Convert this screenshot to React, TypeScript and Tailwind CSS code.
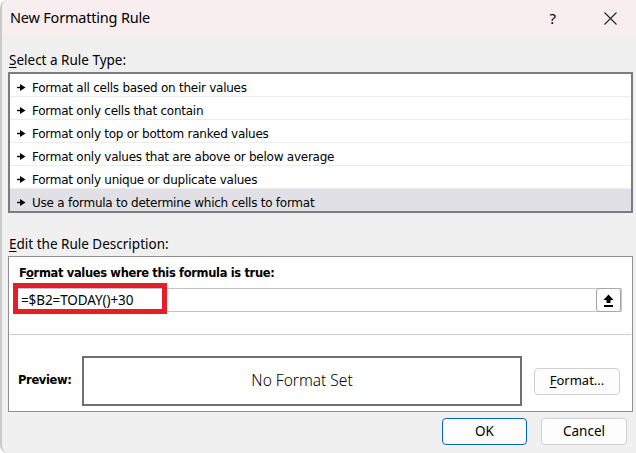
import React from 'react';

const segoe = { fontFamily: '"Noto Sans", "Open Sans", sans-serif' };
const tahoma = { fontFamily: '"DejaVu Sans", Verdana, sans-serif' };

const ruleTypes = [
  'Format all cells based on their values',
  'Format only cells that contain',
  'Format only top or bottom ranked values',
  'Format only values that are above or below average',
  'Format only unique or duplicate values',
  'Use a formula to determine which cells to format',
];

const Pointer = () => (
  <svg width="9" height="7" viewBox="0 0 9 7" className="shrink-0">
    <rect x="0" y="2.8" width="4" height="1.4" fill="#000" />
    <path d="M3 0 L8.5 3.5 L3 7 Z" fill="#000" />
  </svg>
);

const App = () => {
  return (
    <div className="w-[636px] h-[453px] overflow-hidden bg-[#f0f0f0] border-l-2 border-[#c9c9c9] rounded-l-[8px] flex flex-col text-black">
      {/* Title bar */}
      <div className="h-[36px] shrink-0 bg-[#f8eeef] flex items-center pl-[8px]" style={segoe}>
        <span className="text-[14.5px] tracking-[-0.2px]">New Formatting Rule</span>
        <span className="ml-auto text-[15px] mr-[48px]">?</span>
        <svg width="13" height="13" viewBox="0 0 13 13" className="mr-[19px]">
          <path d="M0.5 0.5 L12.5 12.5 M12.5 0.5 L0.5 12.5" stroke="#222" strokeWidth="1.1" />
        </svg>
      </div>

      <div className="pt-[15px] pl-[7px] text-[13.5px] leading-[18px]" style={segoe}>
        <span className="underline underline-offset-2">S</span>elect a Rule Type:
      </div>

      {/* Rule type list */}
      <div className="ml-[6px] mt-[3px] w-[625px] h-[141px] border-2 border-[#7c7c7c] bg-white flex flex-col" style={tahoma}>
        {ruleTypes.map((r, i) => (
          <div
            key={r}
            className={`flex items-center gap-[6px] pl-[7px] pt-[5px] text-[12px] tracking-[-0.25px] ${
              i === ruleTypes.length - 1 ? 'h-[22px] bg-[#e0e0e6]' : 'h-[23px] border-b border-[#ececec]'
            }`}
          >
            <Pointer />
            <span>{r}</span>
          </div>
        ))}
      </div>

      <div className="mt-[22px] pl-[7px] text-[13.5px] leading-[18px]" style={segoe}>
        <span className="underline underline-offset-2">E</span>dit the Rule Description:
      </div>

      {/* Rule description */}
      <div className="ml-[6px] mt-[3px] w-[625px] h-[156px] border border-[#8f8f8f] bg-white flex flex-col">
        <div className="pt-[8px] pl-[10px] text-[11.5px] font-bold tracking-[-0.35px] leading-[16px]" style={tahoma}>
          F<span className="underline">o</span>rmat values where this formula is true:
        </div>
        <div className="relative ml-[6px] mt-[7px] w-[607px] h-[24px] border border-[#c4c4c4] flex items-center">
          <span className="pl-[5px] text-[13.5px] tracking-[-0.1px]" style={segoe}>=$B2=TODAY()+30</span>
          <div className="ml-auto w-[25px] h-[24px] -mt-[1px] -mb-[1px] border border-[#a6a6a6] rounded-[3px] bg-white flex items-center justify-center">
            <svg width="11" height="13" viewBox="0 0 11 13">
              <path d="M5.5 0.5 L10.5 6 L7.5 6 L7.5 9 L3.5 9 L3.5 6 L0.5 6 Z" fill="#000" />
              <rect x="1" y="11" width="9" height="2" fill="#000" />
            </svg>
          </div>
          <div className="absolute left-[-3px] top-[-6px] w-[154px] h-[31px] border-[5px] border-[#e81c2a]" />
        </div>
        <div className="mt-[22px] mx-[1px] border-t border-[#cacaca]" />
        <div className="mt-[21px] flex items-center">
          <span className="pl-[9px] w-[73px] text-[11.5px] font-bold tracking-[-0.35px]" style={tahoma}>Preview:</span>
          <div className="w-[440px] h-[50px] border-2 border-[#707070] flex items-center justify-center text-[15.5px] font-light" style={segoe}>
            No Format Set
          </div>
          <button className="ml-[12px] w-[86px] h-[27px] border border-[#d0d0d0] rounded-[4px] bg-[#fdfdfd] text-[13px] flex items-center justify-center" style={segoe}>
            <span className="underline underline-offset-2">F</span>ormat...
          </button>
        </div>
      </div>

      {/* Buttons */}
      <div className="mt-[6px] flex pl-[440px] gap-[14px]" style={segoe}>
        <button className="w-[85px] h-[27px] border border-[#0067c0] rounded-[4px] bg-[#fdfdfd] text-[13.5px] flex items-center justify-center">
          OK
        </button>
        <button className="w-[86px] h-[27px] border border-[#d0d0d0] rounded-[4px] bg-[#fdfdfd] text-[13.5px] flex items-center justify-center">
          Cancel
        </button>
      </div>
    </div>
  );
};

export default App;
